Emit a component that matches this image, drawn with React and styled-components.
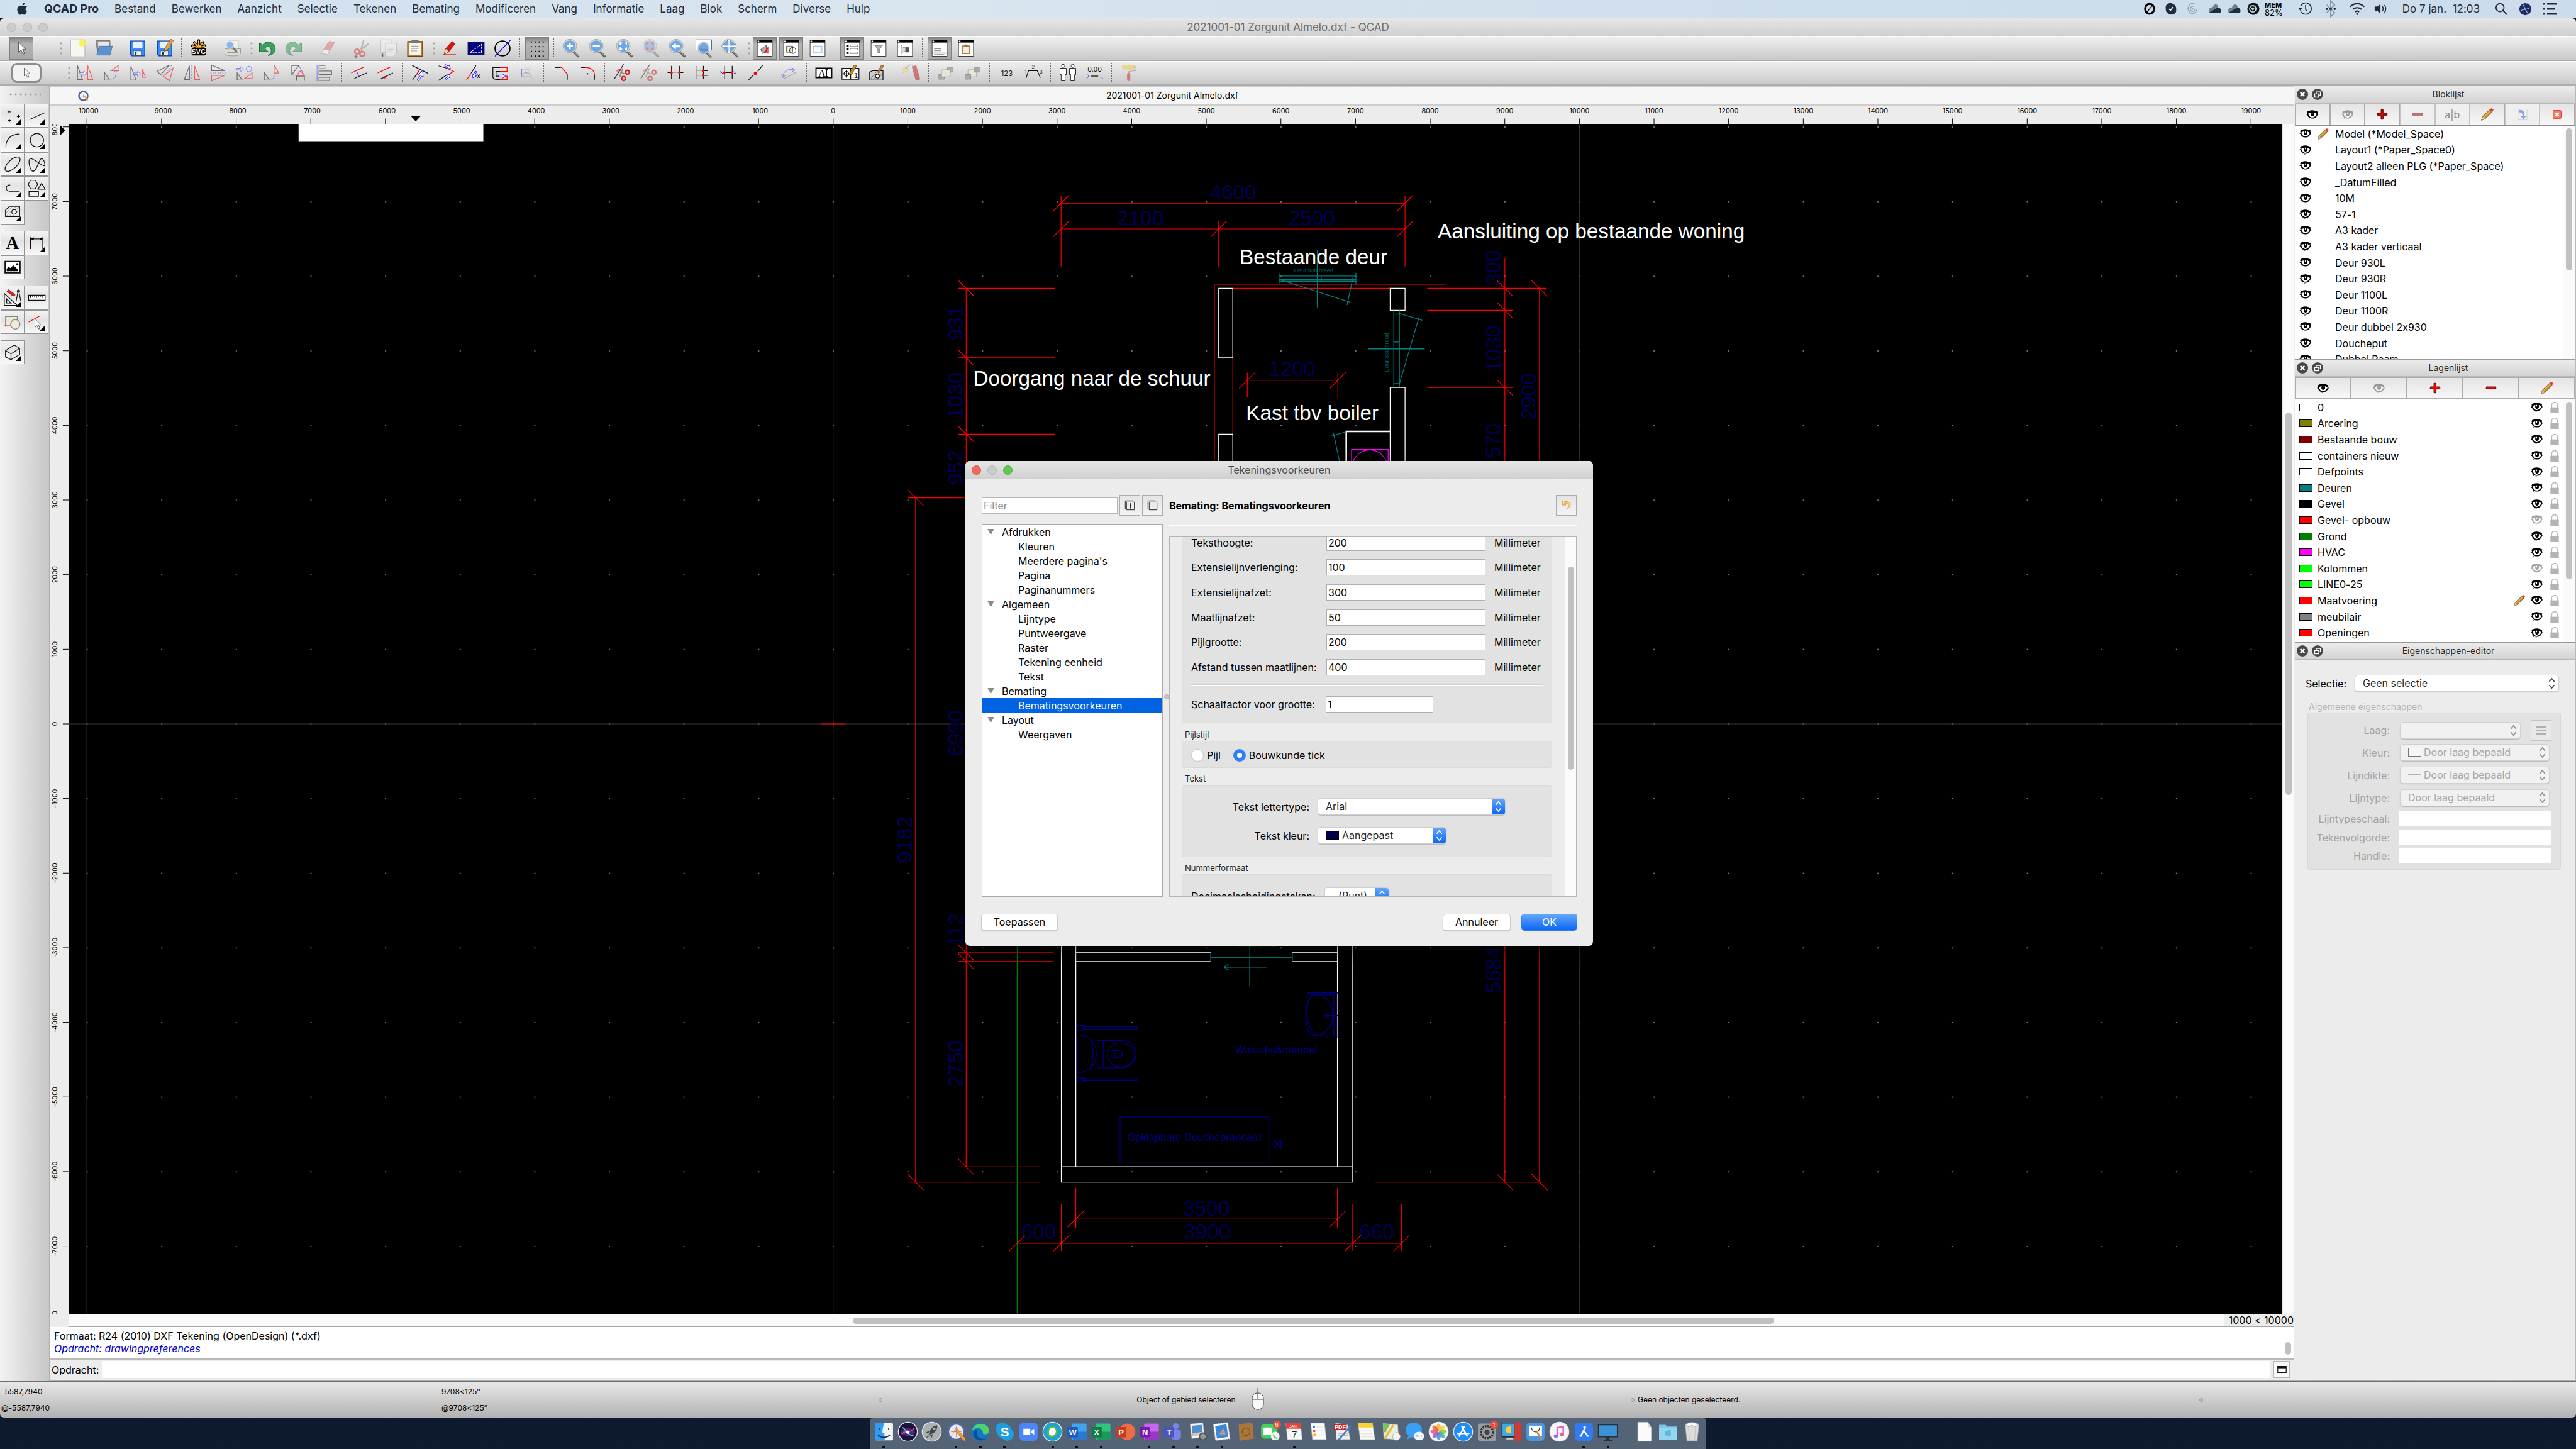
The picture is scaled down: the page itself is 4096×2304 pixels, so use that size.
import React from "react";
import styled, { createGlobalStyle, css } from "styled-components";

const UI = `Inter, "Liberation Sans", sans-serif`;
const CAD = `"Liberation Sans", Arial, sans-serif`;

const Global = createGlobalStyle`
  *, *::before, *::after { box-sizing: border-box; }
  html, body { margin: 0; height: 100%; background: #0a1322; }
  body { font-family: ${UI}; font-size: 16px; line-height: 20px; color: #000; overflow: hidden; font-feature-settings: "calt" 0; }
  button, input, select { font: inherit; font-feature-settings: inherit; color: inherit; margin: 0; padding: 0; border: 0; border-radius: 0; background: none; outline: none; }
  ul { list-style: none; margin: 0; padding: 0; }
  h1, h2, h3, p { margin: 0; font-weight: 400; font-size: inherit; }
  svg { display: block; }
`;

/* ------------------------------------------------------------------ shell */

const Desktop = styled.div`
  height: 100vh;
  display: grid;
  grid-template-rows: 29px 29px 39px 39px minmax(0, 1fr) 58px 50px;
  background: linear-gradient(180deg, #060b16 0%, #0d1a30 100%);
  position: relative;
`;

const MenuBar = styled.header`
  display: flex;
  justify-content: space-between;
  align-items: center;
  padding: 0 29px 0 27px;
  background: linear-gradient(90deg, #cfe0ee, #d9e5ef 35%, #cfdeec 70%, #ccdcec);
  border-bottom: 1px solid #1b2438;
  color: #1f2c3a;
  font-size: 17px;
`;
const MenuList = styled.nav`
  display: flex;
  align-items: center;
  gap: 25px;
`;
const MenuButton = styled.button`
  white-space: nowrap;
  ${(p) => p.$strong && css`font-weight: 700; font-size: 18px;`}
`;
const Tray = styled.div`
  display: flex;
  align-items: center;
  gap: 23px;
  white-space: nowrap;
`;
const TrayGroup = styled.div`
  display: flex;
  align-items: center;
  gap: ${(p) => p.$gap}px;
`;
const Mem = styled.div`
  font-size: 13px;
  line-height: 13px;
  color: #000;
  b { display: block; font-size: 11px; line-height: 12px; }
`;

const TitleBar = styled.div`
  display: flex;
  align-items: center;
  justify-content: center;
  position: relative;
  font-size: 17px;
  color: #6b6b6b;
  background: linear-gradient(180deg, #e6e6e6, #cfcfcf);
  border-bottom: 1px solid #a5a5a5;
  border-radius: 6px 6px 0 0;
`;
const Lights = styled.div`
  position: absolute;
  left: ${(p) => p.$left}px;
  display: flex;
  gap: ${(p) => p.$gap}px;
`;
const Light = styled.button`
  width: 15px;
  height: 15px;
  border-radius: 50%;
  background: ${(p) => p.$c || "#cbcbcb"};
  border: 1px solid ${(p) => p.$b || "#b2b2b2"};
`;

const ToolBar = styled.div`
  background: linear-gradient(180deg, #efefef, #c9c9c9);
  border-top: 1px solid #fafafa;
  border-bottom: 2px solid #adadad;
  overflow: hidden;
`;
const ToolStrip = styled.div`
  display: flex;
  align-items: center;
  justify-content: space-between;
  height: 36px;
  margin-left: 15px;
  width: ${(p) => p.$w}px;
`;
const ToolButton = styled.button`
  flex: none;
  width: 38px;
  height: 36px;
  display: grid;
  place-items: center;
  ${(p) => p.$on && css`background: linear-gradient(180deg, #868686, #b4b4b4 30%, #a8a8a8); border: 1px solid #808080;`}
  ${(p) => p.$off && css`opacity: 0.55;`}
`;
const PointerButton = styled.button`
  flex: none;
  width: 48px;
  height: 32px;
  margin-left: 3px;
  display: grid;
  place-items: center;
  border: 3px solid #8c8c8c;
  border-radius: 9px;
  background: #f2f2f2;
`;
const Sep = styled.span`
  flex: none;
  width: 8px;
  height: 32px;
  background: repeating-linear-gradient(180deg, #6f6f6f 0 2px, transparent 2px 4px) center / 1px 100% no-repeat;
`;
const Grip = styled.span`
  flex: none;
  width: 8px;
  height: 20px;
  background: radial-gradient(circle, #a2a2a2 1px, transparent 2px) right center / 4px 8px repeat-y;
`;
const Blank = styled.span`
  flex: none;
  width: ${(p) => p.$w}px;
`;

const Main = styled.main`
  display: grid;
  grid-template-columns: 80px minmax(0, 1fr) 449px;
  min-height: 0;
  background: #ececec;
`;

const Palette = styled.aside`
  background: linear-gradient(90deg, #f3f3f3, #c6c6c6);
  border-right: 2px solid #b0b0b0;
  padding: 9px 1px 0;
  display: flex;
  flex-direction: column;
  gap: 10px;
`;
const PaletteDots = styled.div`
  height: 10px;
  margin: 0 12px;
  background: radial-gradient(circle, #a2a2a2 1px, transparent 2px) left center / 8px 8px repeat-x;
`;
const PaletteGroup = styled.div`
  display: grid;
  grid-template-columns: 1fr 1fr;
  grid-auto-rows: 1fr;
  height: ${(p) => p.$h}px;
`;
const PaletteButton = styled.button`
  position: relative;
  border: 1px solid #949494;
  background: linear-gradient(180deg, #f3f3f3, #e3e3e3 40%, #f8f8f8);
  display: grid;
  place-items: center;
  ${(p) => p.$menu && css`
    &::after {
      content: "";
      position: absolute;
      right: 5px;
      bottom: 4px;
      border: 4px solid transparent;
      border-right-color: #000;
      border-bottom-color: #000;
    }
  `}
`;

/* ----------------------------------------------------------------- center */

const Center = styled.section`
  display: grid;
  grid-template-rows: 32px 29px minmax(0, 1fr) 21px 52px 34px;
  min-width: 0;
  min-height: 0;
`;
const Tab = styled.div`
  display: flex;
  align-items: center;
  background: #f6f6f6;
  border-top: 2px solid #cdcdcd;
  border-bottom: 2px solid #cdcdcd;
  font-size: 14px;
  padding-left: 44px;
`;
const TabTitle = styled.h2`
  flex: 1;
  text-align: center;
  margin-right: 60px;
`;
const RulerTop = styled.div`
  background: #ececec;
  overflow: hidden;
  svg { width: 100%; height: 100%; }
`;
const CanvasRow = styled.div`
  display: grid;
  grid-template-columns: 29px minmax(0, 1fr) 18px;
  min-height: 0;
`;
const RulerSide = styled(RulerTop)``;
const Canvas = styled.div`
  background: #000;
  min-height: 0;
  svg { width: 100%; height: 100%; }
`;
const VTrack = styled.div`
  background: ${(p) => p.$bg || "#fafafa"};
  border-left: 1px solid #e3e3e3;
  display: grid;
  justify-content: center;
  align-content: start;
  padding-top: ${(p) => p.$top}px;
`;
const VThumb = styled.div`
  width: 10px;
  height: ${(p) => p.$h}px;
  border-radius: 5px;
  background: #c1c1c1;
`;
const HScroll = styled.div`
  margin-left: 29px;
  display: flex;
  align-items: center;
  justify-content: space-between;
  border-bottom: 1px solid #a8a8a8;
`;
const HTrack = styled.div`
  flex: 1;
  height: 18px;
  background: #fafafa;
  padding: 5px 0 0 1247px;
`;
const HThumb = styled.div`
  width: 1465px;
  height: 10px;
  border-radius: 5px;
  background: #c1c1c1;
`;
const ScaleNote = styled.span`
  white-space: nowrap;
  padding-left: 8px;
`;
const Log = styled.div`
  display: grid;
  grid-template-columns: minmax(0, 1fr) 19px;
  background: #fff;
  border-bottom: 2px solid #b9b9b9;
`;
const LogLines = styled.div`
  height: 50px;
  overflow: hidden;
  display: flex;
  flex-direction: column;
  justify-content: flex-end;
  padding: 0 0 6px 6px;
  em { color: #0000c8; }
`;
const Command = styled.label`
  display: flex;
  align-items: center;
  gap: 5px;
  padding: 0 6px 1px 2px;
  border-bottom: 2px solid #aeaeae;
`;
const CommandInput = styled.input`
  flex: 1;
  height: 27px;
  background: #fff;
`;
const CommandButton = styled.button`
  width: 26px;
  height: 27px;
  background: #fafafa;
  border: 1px solid #b5b5b5;
  display: grid;
  place-items: center;
`;

/* ------------------------------------------------------------------ docks */

const Docks = styled.aside`
  display: flex;
  flex-direction: column;
  border-left: 1px solid #8f8f8f;
  border-right: 2px solid #b8b8b8;
  border-bottom: 2px solid #aeaeae;
  padding-left: 1px;
  min-height: 0;
`;
const DockHeader = styled.div`
  flex: none;
  height: 29px;
  display: flex;
  align-items: center;
  gap: 6px;
  padding-left: 3px;
  font-size: 14px;
  background: linear-gradient(180deg, #ececec, #d3d3d3);
  border-top: 1px solid #989898;
  border-bottom: 2px solid #b8b8b8;
  h2 { flex: 1; text-align: center; margin-right: 8px; color: #2a2a2a; }
`;
const RoundButton = styled.button`
  width: 18px;
  height: 26px;
  display: grid;
  place-items: center;
`;
const DockTools = styled.div`
  flex: none;
  height: 34px;
  display: grid;
  grid-auto-flow: column;
  grid-auto-columns: 1fr;
`;
const DockTool = styled.button`
  border: 1px solid #adadad;
  background: linear-gradient(180deg, #e4e4e4, #f7f7f7);
  display: grid;
  place-items: center;
  color: #8a8a8a;
  ${(p) => p.$off && css`border-color: #c4c4c4; background: #efefef; svg { opacity: 0.55; }`}
`;
const ListFrame = styled.div`
  flex: none;
  height: ${(p) => p.$h}px;
  display: grid;
  grid-template-columns: minmax(0, 1fr) 19px;
  grid-template-rows: 100%;
  overflow: hidden;
  background: #fff;
  border-top: 1px solid #8e8e8e;
`;
const List = styled.ul`
  display: grid;
  grid-auto-rows: 1fr;
  height: 384px;
  padding-left: 7px;
`;
const Row = styled.li`
  display: grid;
  grid-template-columns: ${(p) => p.$cols};
  align-items: center;
  white-space: nowrap;
`;
const Swatch = styled.span`
  display: block;
  width: 21px;
  height: ${(p) => p.$h || 12}px;
  background: ${(p) => p.$c};
  border: 1px solid ${(p) => p.$b || "#000"};
`;

const Props = styled.form`
  padding: 24px 22px 0 17px;
`;
const SelectionRow = styled.label`
  display: grid;
  grid-template-columns: 79px minmax(0, 1fr);
  align-items: center;
  margin: 0 4px 16px 0;
`;
const GroupTitle = styled.h3`
  font-size: ${(p) => p.$size || 14}px;
  line-height: 18px;
  padding-left: 5px;
  color: ${(p) => p.$c || "#1c1c1c"};
`;
const PropGroup = styled.div`
  margin-left: 3px;
  background: #e2e2e2;
  border: 1px solid #d8d8d8;
  border-radius: 4px;
  padding: 10px 14px 9px 12px;
  color: #a3a3a3;
`;
const PropLine = styled.label`
  display: grid;
  grid-template-columns: 118px minmax(0, 1fr);
  column-gap: ${(p) => p.$gap}px;
  align-items: center;
  height: 25px;
  margin-top: ${(p) => p.$mt || 0}px;
  padding-right: ${(p) => p.$end || 0}px;
  span:first-child { text-align: right; }
`;
const PropTop = styled.div`
  display: flex;
  align-items: center;
  gap: 17px;
  height: 34px;
  label { flex: 1; }
`;
const PropText = styled.input`
  height: 25px;
  width: 100%;
  background: #fff;
  border: 1px solid #c4c4c4;
`;
const MiniButton = styled.button`
  width: 33px;
  height: 33px;
  border: 1px solid #c4c4c4;
  background: #e8e8e8;
  display: grid;
  place-items: center;
`;

/* --------------------------------------------------------------- controls */

const SelectBox = styled.span`
  position: relative;
  display: block;
  width: ${(p) => (p.$w ? p.$w + "px" : "100%")};
  height: 25px;
  border-radius: 4px;
  background: ${(p) => (p.$off ? "#f1f1f1" : "#fff")};
  box-shadow: 0 0 0 1px ${(p) => (p.$off ? "#d2d2d2" : "#cfcfcf")}, 0 1px 1px 1px #b9b9b9;
  overflow: ${(p) => (p.$blue ? "hidden" : "visible")};
  select {
    appearance: none;
    width: 100%;
    height: 25px;
    line-height: 25px;
    padding-left: ${(p) => p.$pad || 12}px;
    color: ${(p) => (p.$off ? "#a6a6a6" : "#1f1f1f")};
    opacity: 1;
  }
`;
const Arrows = styled.span`
  position: absolute;
  right: 0;
  top: 0;
  width: 21px;
  height: 25px;
  display: grid;
  place-items: center;
  pointer-events: none;
  color: ${(p) => (p.$blue ? "#fff" : p.$off ? "#8a8a8a" : "#3a3a3a")};
  ${(p) => p.$blue && css`background: linear-gradient(180deg, #63a6fb, #0a66f5);`}
`;
const InSelect = styled.span`
  position: absolute;
  left: 12px;
  top: 5px;
  display: block;
  pointer-events: none;
`;

/* ----------------------------------------------------------------- dialog */

const Dialog = styled.div`
  position: absolute;
  left: 1535px;
  top: 733px;
  width: 998px;
  height: 771px;
  border-radius: 7px;
  overflow: hidden;
  background: #ececec;
  display: grid;
  grid-template-rows: 29px minmax(0, 1fr);
  box-shadow: 0 10px 30px rgba(0, 0, 0, 0.5);
`;
const DialogTitle = styled.div`
  position: relative;
  display: flex;
  align-items: center;
  justify-content: center;
  color: #4a4a4a;
  background: linear-gradient(180deg, #e6e6e6, #d0d0d0);
  border-bottom: 1px solid #b4b4b4;
`;
const DialogBody = styled.div`
  padding: 25px 26px;
  display: grid;
  grid-template-columns: 288px minmax(0, 1fr);
  column-gap: 10px;
  grid-template-rows: 33px minmax(0, 1fr) 26px;
`;
const FilterRow = styled.div`
  display: flex;
  align-items: center;
  gap: 3px;
`;
const FilterInput = styled.input`
  flex: 1;
  min-width: 0;
  height: 26px;
  background: #fff;
  border: 1px solid #b6b6b6;
  padding-left: 2px;
  &::placeholder { color: #8a8a8a; opacity: 1; }
`;
const SquareButton = styled.button`
  width: 33px;
  height: 33px;
  border: 1px solid #adadad;
  background: linear-gradient(180deg, #e4e4e4, #f4f4f4);
  display: grid;
  place-items: center;
`;
const HeadRow = styled.div`
  display: flex;
  align-items: center;
  justify-content: space-between;
  font-weight: 700;
`;
const Tree = styled.ul`
  margin: 13px 0 27px;
  background: #fff;
  border: 1px solid #a9a9a9;
`;
const TreeRow = styled.li`
  height: 23px;
  display: flex;
  align-items: center;
  padding-left: ${(p) => (p.$child ? 57 : 8)}px;
  gap: 12px;
  ${(p) => p.$sel && css`background: #0063e1; color: #fff;`}
`;
const Disclosure = styled.span`
  width: 11px;
  height: 10px;
  background: #8a8a8a;
  clip-path: polygon(0 0, 100% 0, 50% 100%);
`;
const PanelSide = styled.div`
  position: relative;
  margin: 15px 0 27px;
  border-top: 1px solid #fff;
  padding-top: 17px;
  min-height: 0;
  display: grid;
`;
const SplitDot = styled.span`
  position: absolute;
  left: -8px;
  top: 268px;
  width: 8px;
  height: 8px;
  border-radius: 50%;
  background: #c6c6c6;
  border: 1px solid #adadad;
`;
const Viewport = styled.div`
  min-height: 0;
  border: 1px solid #b5b5b5;
  display: grid;
  grid-template-columns: minmax(0, 1fr) 18px;
  grid-template-rows: minmax(0, 1fr);
`;
const Scroller = styled.div`
  overflow: hidden;
  display: flex;
  flex-direction: column;
  padding: 0 20px 0 19px;
`;
const Box = styled.div`
  flex: none;
  height: ${(p) => p.$h}px;
  background: #e2e2e2;
  border: 1px solid #d9d9d9;
  border-radius: 4px;
  padding: 0 14px;
  ${(p) => p.$cut && css`border-top: 0; border-radius: 0 0 4px 4px;`}
`;
const Fields = styled.div`
  display: grid;
  grid-auto-rows: 1fr;
  height: 238px;
  margin-top: -11px;
`;
const Field = styled.label`
  display: grid;
  grid-template-columns: ${(p) => p.$cols};
  align-items: center;
`;
const Unit = styled.span`
  padding-left: 14px;
`;
const NumberInput = styled.input`
  height: 26px;
  min-width: 0;
  background: #fff;
  border: 1px solid #b0b0b0;
  padding-left: 2px;
`;
const Rule = styled.hr`
  height: 2px;
  border: 0;
  margin: 7px 0 17px;
  background: linear-gradient(180deg, #cdcdcd 50%, #fff 50%);
`;
const SubTitle = styled(GroupTitle)`
  flex: none;
  height: ${(p) => p.$h}px;
  padding-top: ${(p) => p.$h - 19}px;
`;
const Radios = styled.div`
  display: flex;
  align-items: center;
  gap: 20px;
  height: 43px;
  label { display: flex; align-items: center; gap: 5px; }
`;
const Radio = styled.input`
  appearance: none;
  width: 20px;
  height: 20px;
  border-radius: 50%;
  background: #fff;
  border: 1px solid #c6c6c6;
  &:checked { border: 6px solid #2f80f8; }
`;
const Combos = styled.div`
  display: flex;
  flex-direction: column;
  gap: 21px;
  padding-top: 21px;
`;
const Combo = styled.label`
  display: grid;
  grid-template-columns: ${(p) => p.$cols || "188px auto"};
  column-gap: 14px;
  justify-content: start;
  align-items: center;
  span:first-child { text-align: ${(p) => (p.$left ? "left" : "right")}; white-space: nowrap; }
`;
const Actions = styled.div`
  grid-column: 1 / -1;
  display: flex;
  align-items: center;
  gap: 19px;
`;
const PushButton = styled.button`
  width: ${(p) => p.$w}px;
  height: 25px;
  border-radius: 4px;
  background: #fff;
  box-shadow: 0 0 0 1px #cdcdcd, 0 1px 1px 1px #b5b5b5;
  ${(p) => p.$push && css`margin-left: auto;`}
  ${(p) => p.$primary && css`background: linear-gradient(180deg, #63a6fb, #0a66f5); color: #fff; box-shadow: 0 0 0 1px #2f7ef0;`}
`;

/* -------------------------------------------------------- status and dock */

const StatusBar = styled.footer`
  display: grid;
  grid-template-columns: 699px 698px 1196px 904px minmax(0, 1fr);
  align-items: center;
  background: linear-gradient(180deg, #e8e8e8, #b2b2b2);
  border-top: 1px solid #6e6e6e;
  font-size: 12px;
  border-radius: 0 0 6px 6px;
`;
const Coords = styled.div`
  height: 52px;
  padding-left: 2px;
  display: flex;
  flex-direction: column;
  justify-content: space-around;
  line-height: 16px;
  border-left: ${(p) => (p.$line ? "1px solid #f5f5f5" : "0")};
`;
const StatusHint = styled.div`
  display: grid;
  grid-template-columns: 9px minmax(0, 1fr) 70px minmax(0, 1fr);
  align-items: center;
  span:nth-child(2) { text-align: right; }
  svg { justify-self: center; }
`;
const StatusCell = styled.div`
  display: flex;
  align-items: center;
  gap: 5px;
`;
const Dot = styled.i`
  width: 6px;
  height: 6px;
  border-radius: 50%;
  background: #c3c3c3;
  border: 1px solid #969696;
`;
const DockBar = styled.nav`
  justify-self: center;
  width: 1330px;
  background: #556377;
  border-radius: 6px 6px 0 0;
  padding: 0 3px;
  display: grid;
  grid-template-columns: repeat(31, 1fr) 19px repeat(3, 1fr);
`;
const DockApp = styled.button`
  position: relative;
  display: grid;
  grid-template-rows: 44px 6px;
  place-items: center;
  overflow: visible;
`;
const Running = styled.i`
  width: 4px;
  height: 4px;
  border-radius: 50%;
  background: #000;
`;
const Badge = styled.span`
  position: absolute;
  right: 2px;
  top: 5px;
  width: 13px;
  height: 13px;
  border-radius: 50%;
  background: #ea4b3d;
  color: #fff;
  font-size: 9px;
  line-height: 13px;
`;
const DockLine = styled.i`
  width: 1px;
  height: 36px;
  margin: 7px auto;
  background: #2d3746;
`;

/* ------------------------------------------------------------------ icons */

const Svg = ({ s = 30, h, vb = "0 0 48 48", children }) => (
  <svg width={s} height={h || s} viewBox={vb} fill="none" aria-hidden="true">{children}</svg>
);

const Eye = ({ off }) => (
  <svg width="19" height="15" viewBox="0 0 30 24" aria-hidden="true" opacity={off ? 0.35 : 1}>
    <path d="M0 11 3 9C1 5 3 2 8 1.500 13 0 18 0 23 2L29 4 28 7 30 11C27 14 26 19 20 21 12 23 5 20 3 13Z" fill="#000" />
    <path d="M5 9C8 7 9 7 12 6 10 12 12 16 16 16 20 16 22 11 20 6L27 10C24 16 20 19 15 19 10 19 6 14 5 9Z" fill="#fff" />
    <path d="M15 6V10" stroke="#fff" strokeWidth="2" />
    <path d="M6 21 8 22M12 23 15 23" stroke="#000" />
  </svg>
);
const Lock = () => (
  <svg width="14" height="18" viewBox="0 0 20 27" aria-hidden="true">
    <path d="M3 14V8a7 7 0 0 1 14 0V14" fill="none" stroke="#bababa" strokeWidth="2.500" />
    <rect x="0" y="13" width="20" height="14" fill="#b3b3b3" />
  </svg>
);
const Pencil = ({ s = 18 }) => (
  <svg width={s} height={s} viewBox="0 0 28 28" aria-hidden="true">
    <path d="M1 27 4 18 20 3 25 8 9 24Z" fill="#c8882c" stroke="#5b3a10" strokeWidth="1" />
    <path d="M6 20 21 6" stroke="#edc070" strokeWidth="2" />
    <path d="M1 27 4 18 9 24Z" fill="#f0d8a8" stroke="#5b3a10" strokeWidth=".6" />
    <path d="M20 3 23 0 28 3 25 8Z" fill="#e33" />
  </svg>
);
const Plus = () => <Svg s={18} vb="0 0 28 28"><path d="M11 2h5v9h10v5H16v10h-5V16H2v-5h9Z" fill="#f00" stroke="#300" strokeWidth="1.500" /></Svg>;
const Minus = () => <Svg s={18} vb="0 0 28 28"><path d="M2 11h24v5H2Z" fill="#f00" stroke="#300" strokeWidth="1.500" /></Svg>;
const Chevrons = () => <Svg s={11} h={19} vb="0 0 16 28"><path d="M2 10 8 3 14 10M2 18 8 25 14 18" stroke="currentColor" strokeWidth="2.600" /></Svg>;

const glass = (inner, o = 1) => (
  <g opacity={o}>
    <path d="M30 32 42 44" stroke="#5c5c58" strokeWidth="6" strokeLinecap="round" />
    <path d="M31 32 42 43" stroke="#a9a99f" strokeWidth="2" strokeLinecap="round" />
    <circle cx="21" cy="18" r="16" fill="#6fa6e4" stroke="#d5d5cc" strokeWidth="3" />
    <circle cx="21" cy="18" r="17.500" stroke="#8b8b82" strokeWidth="1" />
    {inner}
  </g>
);
const panel = (inner) => (
  <g>
    <path d="M5 3h38v41H5Z" fill="#fff" stroke="#333" strokeWidth="1.500" />
    <path d="M5 3h38v6H5Z" fill="#000" />
    <path d="M6 4h4v4H6Z" fill="#fff" />
    {inner}
  </g>
);
const cursor = <path d="M17 8 17 34 23 28 28 39 32 37 27 26 35 26Z" fill="#fff" stroke="#444" strokeWidth="1.500" />;
const K = { stroke: "#111", strokeWidth: 2 };
const R = { stroke: "#f00", strokeWidth: 2 };
const B = { stroke: "#22f", strokeWidth: 1.5 };
const RF = { fill: "#f00" };
const bArrow = (t) => <path transform={t} d="M0-2H10V-6L18 0 10 6V2H0Z" fill="#fff" {...B} />;

const I = {
  cursor,
  file: <g><path d="M7 2h36v43H7Z" fill="#f7f7f2" stroke="#999" /><circle cx="37" cy="10" r="9" fill="#f7f13a" opacity=".8" /></g>,
  open: <g><path d="M4 4h36v14H10L8 36Z" fill="#9b9b9b" stroke="#555" /><path d="M10 8h28v14H10Z" fill="#e8e8e8" /><path d="M12 18h34l-6 23H6Z" fill="#5a93cf" stroke="#2c5f9a" /></g>,
  save: <g><path d="M6 5h36v38H9L6 40Z" fill="#3a8bff" stroke="#003a9c" strokeWidth="2" /><path d="M12 6h24v18H12Z" fill="#e6f2ff" /><path d="M13 30h20v12H13Z" fill="#eee" stroke="#234" /><path d="M17 33h4v8h-4Z" fill="#234" /></g>,
  svg: <g><path d="M24 22V4M24 22 13 9M24 22 35 9M24 22 8 17M24 22 40 17" stroke="#000" strokeWidth="7" strokeLinecap="round" /><path d="M24 22V5M24 22 14 10M24 22 34 10M24 22 9 18M24 22 39 18" stroke="#ffb13b" strokeWidth="3.500" strokeLinecap="round" /><rect x="6" y="22" width="36" height="20" rx="4" fill="#000" /><text x="24" y="39" textAnchor="middle" fontFamily={CAD} fontWeight="700" fontSize="17" fill="#fff">SVG</text></g>,
  print: <g><path d="M12 3h26v24H12Z" fill="#eee" stroke="#888" /><path d="M4 25h40v12c0 3-6 6-20 6S4 40 4 37Z" fill="#dcdcd4" stroke="#777" /><path d="M10 34h28" stroke="#999" strokeWidth="3" /><path d="M24 22 33 31" stroke="#777" strokeWidth="5" strokeLinecap="round" /><circle cx="17" cy="15" r="9" fill="#86b6ea" stroke="#ddd" strokeWidth="2" /></g>,
  undo: <path d="M4 10 4 32 26 32 18 24C24 14 34 20 34 30 34 36 30 40 26 42 40 40 46 32 44 22 42 8 22 2 12 15Z" fill="#3aa05a" stroke="#12683a" strokeWidth="1.500" />,
  redo: <path transform="translate(48 0) scale(-1 1)" d="M4 10 4 32 26 32 18 24C24 14 34 20 34 30 34 36 30 40 26 42 40 40 46 32 44 22 42 8 22 2 12 15Z" fill="#3aa05a" stroke="#12683a" strokeWidth="1.500" />,
  eraser: <g><path d="M26 6 40 8 22 40 6 36Z" fill="#e57a7a" stroke="#a33" /><path d="M6 36 12 26 27 29 22 40Z" fill="#fff" stroke="#999" /></g>,
  cut: <g><path d="M28 2 20 30M40 12 16 30" stroke="#999" strokeWidth="4" /><circle cx="11" cy="32" r="6" stroke="#d33" strokeWidth="4" /><circle cx="24" cy="38" r="6" stroke="#d33" strokeWidth="4" /><path d="M8 41v8M4 45h8" {...K} /></g>,
  copy: <g><path d="M4 2h28v32H4Z" fill="#eee" stroke="#999" /><path d="M16 11h28v26l-8 8H16Z" fill="#f4f4f4" stroke="#888" /><path d="M20 20h18M20 26h18M20 32h12" stroke="#bbb" strokeWidth="2" /><path d="M9 37v8M5 41h8" {...K} /></g>,
  paste: <g><path d="M5 6h38v38H5Z" fill="#c07a1e" stroke="#6b430c" strokeWidth="2" /><path d="M9 10h30v30H9Z" fill="#f5f5f0" /><path d="M15 2h18v8H15Z" fill="#777" /><path d="M13 18h20M13 24h20M13 30h16" stroke="#aaa" strokeWidth="2" /></g>,
  pen: <g><path d="M10 39 14 24 30 6 38 12 22 32Z" fill="#d8180f" stroke="#600" /><path d="M10 39 14 24 22 32Z" fill="#f3d9a8" stroke="#543" /><path d="M8 40H40" {...R} /></g>,
  draft: <g><path d="M3 8h42v32H3Z" fill="#000080" stroke="#333" /><path d="M9 34 38 13M38 13V35M8 35H38" stroke="#fff" strokeWidth="2" strokeDasharray="5 2" /></g>,
  circ: <g><circle cx="24" cy="24" r="19" stroke="#000" strokeWidth="3" /><path d="M5 44 44 3" stroke="#00f" strokeWidth="2" /></g>,
  grid: <g fill="#000">{[6, 18, 30, 42].map((y) => [8, 18, 28, 38].map((x) => <rect key={x + "-" + y} x={x} y={y} width="3" height="3" />))}</g>,
  zin: glass(<path d="M19 10h4v6h6v4h-6v6h-4v-6h-6v-4h6Z" fill="#fff" />),
  zout: glass(<path d="M12 16h18v4H12Z" fill="#fff" />),
  zauto: glass(<path d="M13 15V10h5M24 10h5v5M29 21v5h-5M18 26h-5v-5" stroke="#fff" strokeWidth="3" />),
  zsel: glass(<path d="M13 15V10h5M24 10h5v5M29 21v5h-5M18 26h-5v-5" stroke="#e33" strokeWidth="4" />, 0.5),
  zprev: glass(<path d="M10 18 20 9V15H30V21H20V27Z" fill="#fff" />),
  zwin: <g><path d="M4 2h40v26H4Z" fill="#fff" stroke="#2b66b5" strokeWidth="1.500" /><g transform="translate(6 8) scale(.85)">{glass(<path d="M8 20h26v6H10Z" fill="#3f7fd0" opacity=".6" />)}</g></g>,
  zpan: glass(<path d="M21-1 26 5H23V16H34V13L40 18 34 23V20H23V31H26L21 37 16 31H19V20H8V23L2 18 8 13V16H19V5H16Z" fill="#fff" stroke="#2b66b5" strokeWidth="1" />),
  p1: panel(<g><path d="M14 26 28 16V32L18 37Z" fill="#aaa" stroke="#222" /><path d="M24 34 32 22V36Z" {...R} /></g>),
  p2: panel(<g><path d="M12 18h16v16H12Z" fill="#f6efcf" stroke="#222" /><circle cx="28" cy="29" r="8" stroke="#222" strokeWidth="1.500" /></g>),
  p3: panel(<path d="M13 18h22v17H13Z" fill="#f6faff" stroke="#a9c4e6" strokeWidth="2" />),
  p4: panel(<g>{[15, 24, 33].map((y) => <g key={y}><path d={`M9 ${y}h6v5h-6Z`} fill="#000" /><path d={`M19 ${y}h19v4h-19Z`} stroke="#222" /></g>)}</g>),
  p5: panel(<path d="M14 16H34L27 26V36L22 34V26Z" fill="#bbb" stroke="#444" />),
  p6: panel(<g><path d="M14 16 20 22H26V32H20L14 38Z" fill="#ddd" stroke="#555" /><path d="M25 21H34V34H25Z" fill="#555" /><path d="M8 28H40" stroke="#e55" strokeDasharray="3 2" /></g>),
  p7: panel(<g><path d="M10 15h14M10 20h16M10 25h18M10 30h17" stroke="#777" strokeWidth="1.500" /><path d="M5 36H43" stroke="#222" strokeWidth="2" /><path d="M10 40h26" stroke="#777" strokeWidth="2" /></g>),
  p8: panel(<g><path d="M16 18h16v19H16Z" fill="#eee" stroke="#b87a20" strokeWidth="3" /><path d="M20 14h8v5h-8Z" fill="#777" /></g>),

  t1: <g><path d="M5 5V41H18Z" {...K} /><path d="M31 5V41H44Z" {...R} />{bArrow("translate(11 25)")}</g>,
  t2: <g><path d="M5 23V42H18Z" {...K} /><path d="M42 4V18H22Z" {...R} /><path d="M22 40C34 38 36 28 34 18M30 22 34 16 38 22" {...B} /></g>,
  t3: <g><path d="M5 7V42H18Z" {...K} /><path d="M34 14V35H42Z" {...R} />{bArrow("translate(12 26)")}</g>,
  t4: <g><path d="M36 4 4 20 14 28Z" {...K} /><path d="M45 12 36 44 20 32Z" {...R} /><path d="M42 4 24 30" {...B} strokeDasharray="4 3" /></g>,
  t5: <g><path d="M18 6V41H5Z" {...K} /><path d="M31 6V41H44Z" {...R} /><path d="M24 3V44" {...B} strokeDasharray="5 3" /></g>,
  t6: <g><path d="M7 4V18H41Z" {...K} /><path d="M7 44V30H41Z" {...R} /><path d="M4 24H44" {...B} strokeDasharray="3 3" /></g>,
  t7: <g><path d="M5 24V42H18Z" {...K} /><path d="M43 24V38H24Z" {...R} />{bArrow("translate(4 14)")}<circle cx="35" cy="14" r="7" {...B} /></g>,
  t8: <g><path d="M5 23V42H18Z" {...K} /><path d="M30 4V24H42Z" {...R} /><path d="M22 40C32 38 34 30 33 22" {...B} /></g>,
  t9: <g><path d="M8 5H26L8 28ZM20 44V32H40V44" {...K} /><path d="M30 18 40 31H20Z" {...R} /><path d="M26 5 40 31M8 28 20 31" {...B} /></g>,
  t10: <g><path d="M10 5h15v8H10ZM10 19h32v9H10ZM10 35h27v8H10Z" {...K} /><path d="M5 3V45" {...B} /></g>,
  t11: <g><path d="M4 24 36 9" {...R} /><path d="M12 38 43 24" {...K} /><path d="M18 20 24 34" {...B} /></g>,
  t12: <g><path d="M4 24 36 9" {...R} /><path d="M12 39 43 24" {...K} /><circle cx="21" cy="35" r="3" {...RF} /></g>,
  t13: <g><path d="M4 5 44 25M4 43 22 18" {...K} /><path d="M22 16 14 30" {...R} /><path d="M16 42 25 30 20 28 30 18 32 34 28 32 20 44Z" fill="#fff" {...B} /></g>,
  t14: <g><path d="M4 6 24 12M4 43 26 28" {...K} /><path d="M22 11 42 20 26 30" {...R} />{bArrow("translate(20 4) rotate(30) scale(.9)")}{bArrow("translate(22 40) rotate(-50) scale(.9)")}</g>,
  t15: <g><path d="M30 5 18 24" {...K} /><path d="M18 24 6 42" {...R} />{bArrow("translate(30 20) rotate(115)")}<path d="M34 28 40 36M40 28 34 36" {...K} /></g>,
  t16: <g><path d="M24 10H6V34C6 40 12 41 24 41M24 20H14V32H24" {...K} /><path d="M24 10H42V20H24M24 32H42V41H24" {...R} />{bArrow("translate(20 32)")}</g>,
  t17: <g><path d="M12 14H36V34H12Z" {...B} /><path d="M12 34C12 20 34 20 36 34" stroke="#777" strokeWidth="2" /><path d="M20 2 44 46M36 4 12 30" stroke="#f99" /></g>,
  t18: <g><path d="M8 10H22M40 28V41" {...K} /><path d="M22 10H26L40 27V30" {...R} /></g>,
  t19: <g><path d="M8 10H18M42 30V41" {...K} /><path d="M18 10C34 10 42 16 42 30" {...R} /><circle cx="24" cy="26" r="2" fill="#00f" /></g>,
  t20: <g><path d="M28 2 4 40" {...K} /><path d="M10 18 30 26M26 12 18 34" stroke="#888" strokeWidth="3" /><circle cx="38" cy="22" r="5" stroke="#c22" strokeWidth="4" /><circle cx="28" cy="38" r="5" stroke="#c22" strokeWidth="4" /><circle cx="18" cy="16" r="3" {...RF} /></g>,
  t21: <g><path d="M14 6V40M34 6V40M4 23H14M34 23H44" {...K} /><path d="M14 23H34" stroke="#aaa" strokeWidth="2" /><circle cx="14" cy="23" r="3" {...RF} /><circle cx="34" cy="23" r="3" {...RF} /></g>,
  t22: <g><path d="M9 6V40M28 6V40M28 18H40M28 30H40" {...K} /><path d="M9 18H28M9 30H28" stroke="#aaa" strokeWidth="2" /><circle cx="28" cy="18" r="3" {...RF} /><circle cx="28" cy="30" r="3" {...RF} /></g>,
  t23: <g><path d="M14 6V40M34 6V40M14 23H34" {...K} /><circle cx="14" cy="23" r="3" {...RF} /><circle cx="34" cy="23" r="3" {...RF} /><path d="M4 20 10 26M10 20 4 26M38 20 44 26M44 20 38 26" {...B} /></g>,
  t24: <g><path d="M43 4 30 20M6 43 18 30" {...K} /><circle cx="24" cy="25" r="4" {...RF} /></g>,
  t25: <g><path d="M12 38 42 22" stroke="#777" strokeWidth="2" /><path d="M8 34C8 20 20 12 36 16M30 10 38 16 30 22M4 28 8 36 14 30" {...B} /></g>,
  t26: <g><path d="M4 12H44V36H4Z" fill="#fff" stroke="#000" strokeWidth="3" /><text x="19" y="33" textAnchor="middle" fontFamily='"Liberation Serif", serif' fontSize="26" fill="#000">A</text><path d="M31 15V33M28 15H34M28 33H34" {...K} /></g>,
  t27: <g><path d="M3 12H46V40H3ZM25 12V40" {...K} fill="#fff" /><circle cx="14" cy="26" r="6" {...K} /><path d="M14 16V36M4 26H24" {...K} /><text x="36" y="36" textAnchor="middle" fontFamily={CAD} fontSize="18" fill="#111">.1</text><path d="M20 28 34 4 40 6 28 28Z" fill="#c8882c" stroke="#5b3a10" /></g>,
  t28: <g><path d="M5 22 14 18H40V42H5Z" {...K} fill="#ccc" /><path d="M8 40 24 20M16 41 32 20M26 41 39 25" stroke="#444" /><circle cx="26" cy="32" r="5" {...K} fill="#fff" /><path d="M26 22 36 4 42 6 30 24Z" fill="#c8882c" stroke="#5b3a10" /></g>,
  t29: <g><path d="M26 8 36 5 46 40 36 43Z" fill="#c22" stroke="#611" /><path d="M28 6C22 0 14 6 10 14" stroke="#777" strokeWidth="2" /><path d="M9 6 11 13 18 12 13 17 16 24 10 20 3 24 6 17 1 12 8 13Z" fill="#fbe04a" stroke="#a80" strokeWidth=".6" /></g>,
  t30: <g><path d="M28 10h14v12H28ZM6 28h14v12H6Z" fill="#888" stroke="#333" /><path d="M13 16h22v18H13Z" fill="#f3ecd2" stroke="#333" /></g>,
  t31: <g><path d="M13 16h22v18H13Z" fill="#f3ecd2" stroke="#333" /><path d="M28 10h14v12H28Z" fill="#777" stroke="#333" /><path d="M6 28h14v12H6Z" fill="#888" stroke="#333" /></g>,
  t32: <text x="24" y="32" textAnchor="middle" fontFamily={UI} fontSize="18" fill="#111">123</text>,
  t33: <g><path d="M6 36 12 18H34L42 36" {...K} /><g fontFamily={UI} fontSize="12" fill="#111"><text x="20" y="12">2</text><text x="2" y="26">1</text><text x="40" y="26">3</text></g></g>,
  t34: <g fill="#fff" stroke="#222" strokeWidth="1.500">{[12, 36].map((x) => <g key={x}><circle cx={x} cy="6" r="4" /><path d={`M${x - 8} 12h16v16h-3v16h-10v-16h-3Z`} /></g>)}</g>,
  t35: <g><text x="25" y="20" textAnchor="middle" fontFamily={UI} fontSize="17" fill="#111">0.00</text><path d="M16 32H34" {...K} /><path d="M4 26 10 32 4 39M46 26 40 32 46 39" {...B} /></g>,
  t36: <g><rect x="8" y="4" width="30" height="10" rx="2" fill="#f1c832" stroke="#876" /><path d="M38 8H42V18L24 20V24" stroke="#888" strokeWidth="2" /><rect x="20" y="24" width="7" height="20" rx="3" fill="#e22" stroke="#844" /></g>,
};

/* --------------------------------------------------------------- toolbars */

const bar1 = [
  ["cursor", "Selecteren", { $on: true }], 30, "grip", ["file", "Nieuw"], ["open", "Openen"], "|", ["save", "Opslaan"], ["save", "Opslaan als", { pen: true }], "|",
  ["svg", "SVG export"], "|", ["print", "Afdrukvoorbeeld"], "grip", ["undo", "Ongedaan maken"], ["redo", "Opnieuw", { $off: true }], "|", ["eraser", "Wissen", { $off: true }], "|",
  ["cut", "Knippen", { $off: true }], ["copy", "Kopiëren", { $off: true }], ["paste", "Plakken"], "grip", ["pen", "Pen"], ["draft", "Conceptweergave"], ["circ", "Antialiasing"], "|",
  ["grid", "Raster", { $on: true }], "|", ["zin", "Inzoomen"], ["zout", "Uitzoomen"], ["zauto", "Auto zoom"], ["zsel", "Zoom selectie"], ["zprev", "Vorige weergave"], ["zwin", "Zoom venster"], ["zpan", "Pannen"], "grip",
  ["p1", "Bibliotheek", { $on: true }], ["p2", "Blokken", { $on: true }], ["p3", "Lagen"], "|", ["p4", "Eigenschappen", { $on: true }], ["p5", "Filter"], ["p6", "Weergave"], "|", ["p7", "Opdrachtregel", { $on: true }], ["p8", "Klembord"],
];
const t = (n, off) => ["t" + n, "Gereedschap " + n, off ? { $off: true } : {}];
const bar2 = [
  "pointer", "|", 17, "grip", ...[1, 2, 3, 4, 5, 6, 7, 8, 9, 10].map((n) => t(n, 1)), "|", t(11), t(12), "|", t(13), t(14), t(15), t(16), t(17, 1), "|", t(18), t(19), "|",
  t(20), t(20, 1), t(21), t(22), t(23), t(24), "|", t(25, 1), "|", t(26), t(27), t(28), "|", t(29, 1), "|", t(30, 1), t(31, 1), "|", t(32), t(33), "|", t(34), t(35), "|", t(36, 1),
];

const Strip = ({ items, w }) => (
  <ToolStrip $w={w}>
    {items.map((it, i) => {
      if (it === "|") return <Sep key={i} />;
      if (it === "grip") return <Grip key={i} />;
      if (it === "pointer") return <PointerButton key={i} aria-label="Selectie"><Svg s={24}>{cursor}</Svg></PointerButton>;
      if (typeof it === "number") return <Blank key={i} $w={it} />;
      const [id, label, o = {}] = it;
      return (
        <ToolButton key={i} aria-label={label} $on={o.$on} $off={o.$off}>
          <Svg>{I[id]}{o.pen && <g transform="translate(14 0)"><path d="M8 32 12 20 26 0 32 4 18 26Z" fill="#f0a030" stroke="#6b430c" /></g>}</Svg>
        </ToolButton>
      );
    })}
  </ToolStrip>
);

const paletteIcons = {
  points: <path d="M15 10v8M11 14h8M39 22v8M35 26h8M16 32v8M12 36h8" {...K} />,
  line: <path d="M6 34 46 16" {...K} />,
  arc: <path d="M7 40C7 20 22 8 42 8" {...K} />,
  circle: <circle cx="25" cy="24" r="17" {...K} />,
  ellipse: <ellipse cx="24" cy="24" rx="24" ry="11" transform="rotate(-43 24 24)" {...K} />,
  spline: <path d="M14 42C6 36 2 14 8 10 14 6 40 32 44 28 48 24 40 6 36 10 30 14 24 44 14 42Z" {...K} />,
  poly: <path d="M18 16C4 16 6 32 16 32H42" {...K} />,
  shapes: <path d="M9 4H21L27 14 21 26H9L3 14ZM37 12 46 27H28ZM5 33H29V45H5Z" {...K} />,
  hatch: <g><path d="M6 18 16 8H42V34H6Z" {...K} fill="#eee" /><path d="M8 33 32 9M16 33 40 10M24 33 42 17M8 24 22 9" stroke="#555" /><circle cx="28" cy="22" r="6" {...K} fill="#eee" /></g>,
  text: <text x="24" y="40" textAnchor="middle" fontFamily='"Liberation Serif", serif' fontWeight="700" fontSize="46" fill="#000">A</text>,
  dim: <g><path d="M9 10V40M40 10V40M10 14H39" {...K} /><path d="M9 14 17 10V18ZM40 14 32 10V18Z" fill="#000" /></g>,
  image: <g><path d="M5 9H43V38H5Z" {...K} strokeWidth="3" fill="#fff" /><path d="M9 34V28L14 22 18 26 26 19 38 30V34Z" fill="#000" /><circle cx="36" cy="16" r="3" fill="#000" /></g>,
  draw: <g><path d="M3 14V44H36ZM9 28V38H20Z" {...K} /><path d="M9 8 14 4 30 16 30 20 24 20Z" fill="#d22" stroke="#500" /><path d="M38 8 33 34M40 8 45 34" {...K} /><circle cx="39" cy="8" r="3" {...K} /></g>,
  ruler: <g><path d="M4 18H46V31H4Z" {...K} fill="#fff" /><path d="M9 18v7M14 18v4M19 18v4M24 18v7M29 18v4M34 18v4M40 18v7" {...K} /></g>,
  block: <g opacity=".6"><path d="M6 10H36V32H6Z" fill="#f2ebc8" stroke="#444" strokeWidth="2" /><circle cx="31" cy="30" r="12" fill="#f2ebc8" stroke="#444" strokeWidth="2" /><path d="M6 28v8M2 32h8" {...R} /></g>,
  pick: <g><path d="M4 24 34 8" {...R} /><path d="M20 16V38L25 33 30 42 33 40 29 31H35Z" fill="#fff" stroke="#444" strokeWidth="1.500" /></g>,
  box: <path d="M6 20 28 6 42 14V30L20 43 6 36ZM6 20 20 28 42 14M20 28V43" {...K} />,
};
const palette = [
  [192, ["points", "line", "arc", "circle", "ellipse", "spline", "poly", "shapes", "hatch"]],
  [77, ["text", "dim", "image"]],
  [77, ["draw", "ruler", "block", "pick"]],
  [38, ["box"]],
];
const noMenu = ["text", "image", "ruler", "block"];

/* ------------------------------------------------------------- CAD canvas */

const U = 185.4;
const OX = 2070;
const OY = 1798.6;

const tick = (x, y, v) => (v ? `M${x - 20} ${y - 20}L${x + 20} ${y + 20}` : `M${x - 20} ${y + 20}L${x + 20} ${y - 20}`);
const Turn = ({ x, y, children, ...r }) => <text transform={`translate(${x} ${y}) rotate(-90)`} textAnchor="middle" {...r}>{children}</text>;

const redPath = [
  "M2636.400 486V662M3491 486V662M2636.400 505H3491M2636.400 569H3491M3028 550V662",
  tick(2636.4, 505), tick(3491, 505), tick(2636.4, 569), tick(3028, 569), tick(3491, 569),
  "M3063 716.500H3454M3063 889V1079M3099 945H3324M3099 926V988M3324 926V990",
  tick(3099, 945), tick(3324, 945),
  "M3739 642V2937M3825 716.500V2937M3546 716.500H3843M3546 771H3758M3546 963H3758M3416 2937H3843",
  tick(3739, 716.5, 1), tick(3739, 771, 1), tick(3739, 963, 1), tick(3825, 716.5, 1), tick(3739, 2937, 1), tick(3825, 2937, 1),
  "M2400.600 716.500V2899M2381 716.500H2622M2381 889H2622M2381 1079H2622M2380 2367H2618M2380 2389H2618M2380 2899H2584",
  tick(2400.6, 716.5, 1), tick(2400.6, 889, 1), tick(2400.6, 1079, 1), tick(2400.6, 2367, 1), tick(2400.6, 2389, 1), tick(2400.6, 2899, 1),
  "M2275 1237V2937M2255 1237H2584M2255 2937H2584", tick(2275, 1237, 1), tick(2275, 2937, 1),
  "M2673 2952V3050M3323 2952V3050M2673 3029H3323", tick(2673, 3029), tick(3323, 3029),
  "M2637 2992V3108M3361 2992V3108M3482 2992V3108M2527 3089H3482", tick(2527, 3089), tick(2637, 3089), tick(3361, 3089), tick(3482, 3089),
  "M2040 1798.600H2100M2070 1788V1809",
].join("");

const Drawing = () => (
  <svg role="img" aria-label="Plattegrond">
    <defs>
      <pattern id="gridDots" x={OX - 1} y={OY - 1} width={U} height={U} patternUnits="userSpaceOnUse"><rect width="3" height="3" fill="#7b7b7b" /></pattern>
    </defs>
    <g transform="scale(0.64) translate(-170.500 -308)" fill="none" fontFamily={CAD}>
      <rect x="170" y="308" width="5500" height="2960" fill="url(#gridDots)" />
      <path d={`M${OX - 10 * U} 300V3300M${OX} 300V3300M${OX + 10 * U} 300V3300M170 ${OY}H5680`} stroke="#3a3a3a" strokeWidth="1.600" />
      <rect x="742" y="300" width="459" height="51" fill="#fff" />
      <path d="M2527.400 2300V3264" stroke="#008000" strokeWidth="2" />
      <path d="M3592 707H3018V1200" stroke="#800000" strokeWidth="2" />
      <path d={redPath} stroke="#f00" strokeWidth="1.800" />
      <g stroke="#fff" strokeWidth="2">
        <path d="M3028 716.500H3063V889H3028ZM3028 1200V1079H3063V1200M3454 716.500H3491V771H3454ZM3454 1200V963H3491V1200" />
        <path d="M3345 1200V1072H3454" strokeWidth="4" />
        <path d="M2637 2300V2937H3361V2300M2673 2300V2899M3323 2300V2899M2637 2899H3361M2673 2367H3008M2673 2389H3008M3211 2367H3323M3211 2389H3323" />
      </g>
      <g stroke="#008080" strokeWidth="2">
        <path d="M3178 686H3369M3178 695H3369M3178 699H3369M3178 678V707M3369 678V707M3273 622V764M3186 697 3355 751M3362 688 3347 758M3283 688V699" />
        <path d="M3463 771V963M3477 771V963M3463 781H3477M3474 778 3534 796M3527 784 3477 954M3400 867H3540M3463 850H3477V867M3463 953H3477" />
        <path d="M3344 1073 3307 1084M3313 1075 3328 1146" />
        <path d="M3008 2367V2389M3211 2367V2389M3008 2379H3211M3105 2340V2450M3042 2403H3148M3051 2396V2410L3042 2403Z" />
      </g>
      <path d="M3358 1200V1117H3449V1200M3358 1160C3368 1104 3438 1104 3449 1160" stroke="#f0f" strokeWidth="2" />
      <g stroke="#000080" strokeWidth="2">
        <path d="M3248 2467H3324V2579H3248ZM3262 2472H3314V2574H3262C3238 2556 3238 2490 3262 2472M3285 2473C3322 2500 3322 2550 3276 2574C3240 2560 3240 2490 3262 2470M3292 2523H3324M3300 2517 3291 2523 3300 2529Z" />
        <path d="M2677 2542V2564M2689 2550.600H2825V2557.400H2689ZM2677 2548H2695V2559H2677M2677 2672V2694M2689 2680H2825V2685H2689ZM2677 2678H2695V2688H2677" />
        <path d="M2677 2571C2700 2571 2724 2590 2724 2618 2724 2648 2700 2665 2677 2665ZM2711 2585C2718 2610 2718 2630 2708 2658M2726 2585H2790C2834 2590 2834 2648 2790 2653H2726ZM2741 2587V2651M2771 2611V2627M2762 2610H2778C2792 2612 2792 2626 2778 2628H2762" />
        <ellipse cx="2785" cy="2621" rx="34" ry="30" />
        <path d="M2783 2775H3153V2887H2783ZM3165 2832H3183V2853H3165ZM3165 2832 3183 2853M3183 2832 3165 2853" />
      </g>
      <g fill="#000052" fontSize="52" textAnchor="middle">
        <text x="3064" y="496">4600</text>
        <text x="2833" y="560">2100</text>
        <text x="3259" y="560">2500</text>
        <text x="3210" y="935">1200</text>
        <text x="2997" y="3020">3500</text>
        <text x="2999" y="3079">3900</text>
        <text x="2581" y="3079">600</text>
        <text x="3421" y="3079">660</text>
        <Turn x={3729} y={665}>300</Turn>
        <Turn x={3729} y={867}>1030</Turn>
        <Turn x={3816} y={985}>2900</Turn>
        <Turn x={3729} y={1095}>570</Turn>
        <Turn x={3729} y={2410}>5684</Turn>
        <Turn x={2392} y={803}>931</Turn>
        <Turn x={2392} y={983}>1030</Turn>
        <Turn x={2392} y={1162}>952</Turn>
        <Turn x={2392} y={1822}>6990</Turn>
        <Turn x={2392} y={2311}>112</Turn>
        <Turn x={2392} y={2643}>2750</Turn>
        <Turn x={2266} y={2086}>9182</Turn>
      </g>
      <g fill="#000080" fontSize="26" textAnchor="middle">
        <text x="3171" y="2618">Wastafel&amp;meubel</text>
        <text x="2968" y="2835">Opklapbare Douchebrancard</text>
      </g>
      <g fill="#006060" fontSize="14" textAnchor="middle">
        <text x="3264" y="676">Deur 930 breed</text>
        <Turn x={3450} y={876}>Deur 930 breed</Turn>
        <text x="3121" y="2354">Schuifdeur 1100</text>
      </g>
      <g fill="#fff" fontSize="52">
        <text x="3572" y="592">Aansluiting op bestaande woning</text>
        <text x="3080" y="656">Bestaande deur</text>
        <text x="2418" y="958">Doorgang naar de schuur</text>
        <text x="3096" y="1044">Kast tbv boiler</text>
      </g>
    </g>
  </svg>
);

const range = (a, b) => Array.from({ length: b - a + 1 }, (_, i) => a + i);
const HRuler = () => (
  <svg aria-hidden="true">
    <g transform="scale(0.64) translate(-125 -262)" fontFamily={UI} fontSize="17" textAnchor="middle" fill="#000">
      {range(-10, 19).map((n) => (
        <g key={n}>
          <text x={OX + n * U} y="280">{n * 1000}</text>
          <path d={`M${OX + n * U} 294V310`} stroke="#000" strokeWidth="1.600" />
        </g>
      ))}
      <path d="M1021 288H1045L1033 301Z" />
    </g>
  </svg>
);
const VRuler = () => (
  <svg aria-hidden="true">
    <g transform="scale(0.64) translate(-125 -308)" fontFamily={UI} fontSize="17" fill="#000">
      {range(-8, 8).map((n) => (
        <g key={n}>
          <Turn x={142} y={OY - n * U}>{n * 1000}</Turn>
          <path d={`M156 ${OY - n * U}H172`} stroke="#000" strokeWidth="1.600" />
        </g>
      ))}
      <path d="M150 312V336L162 324Z" />
    </g>
  </svg>
);

/* ------------------------------------------------------------------- data */

const menus = ["Bestand", "Bewerken", "Aanzicht", "Selectie", "Tekenen", "Bemating", "Modificeren", "Vang", "Informatie", "Laag", "Blok", "Scherm", "Diverse", "Hulp"];
const blocks = ["Model (*Model_Space)", "Layout1 (*Paper_Space0)", "Layout2 alleen PLG (*Paper_Space)", "_DatumFilled", "10M", "57-1", "A3 kader", "A3 kader verticaal", "Deur 930L", "Deur 930R", "Deur 1100L", "Deur 1100R", "Deur dubbel 2x930", "Doucheput", "Dubbel Raam"];
const layers = [
  ["0", "#fff"], ["Arcering", "#808000"], ["Bestaande bouw", "#800000"], ["containers nieuw", "#fff"], ["Defpoints", "#fff"], ["Deuren", "#008080"], ["Gevel", "#000"],
  ["Gevel- opbouw", "#f00", "off"], ["Grond", "#008000"], ["HVAC", "#f0f"], ["Kolommen", "#0f0", "off"], ["LINE0-25", "#0f0"], ["Maatvoering", "#f00", "edit"], ["meubilair", "#808080"], ["Openingen", "#f00"],
];
const tree = [
  ["Afdrukken"], ["Kleuren", 1], ["Meerdere pagina's", 1], ["Pagina", 1], ["Paginanummers", 1], ["Algemeen"], ["Lijntype", 1], ["Puntweergave", 1], ["Raster", 1],
  ["Tekening eenheid", 1], ["Tekst", 1], ["Bemating"], ["Bematingsvoorkeuren", 1], ["Layout"], ["Weergaven", 1],
];
const sizes = [["Teksthoogte:", "200"], ["Extensielijnverlenging:", "100"], ["Extensielijnafzet:", "300"], ["Maatlijnafzet:", "50"], ["Pijlgrootte:", "200"], ["Afstand tussen maatlijnen:", "400"]];

const letter = (c, l, c2) => (
  <g><rect x="12" y="5" width="34" height="38" rx="3" fill={c2} /><path d="M12 24H46V43H15Z" fill={c} opacity=".6" /><rect x="2" y="13" width="24" height="24" rx="2" fill={c} /><text x="14" y="32" textAnchor="middle" fontFamily={CAD} fontWeight="700" fontSize="19" fill="#fff">{l}</text></g>
);
const disc = (c, inner) => <g><circle cx="24" cy="24" r="22" fill={c} stroke="#e6e6e6" strokeWidth="2" />{inner}</g>;
const tile = (c, inner) => <g><rect x="3" y="3" width="42" height="42" rx="9" fill={c} />{inner}</g>;
const apps = [
  ["Finder", <g><rect x="3" y="4" width="42" height="40" rx="3" fill="#f0f4f8" /><path d="M6 4H25C21 14 20 22 21 27H25L26 44H6Q3 44 3 41V7Q3 4 6 4Z" fill="#2f9bf5" /><path d="M13 15v5M35 15v5M10 31C18 39 30 39 38 31" stroke="#123" strokeWidth="2.500" /></g>, 1],
  ["Siri", disc("#1c1338", <g><path d="M6 26C16 12 30 12 42 26 32 36 16 36 6 26Z" fill="#5a2a8c" opacity=".8" /><path d="M10 30C18 18 28 30 38 16" stroke="#e64bb0" strokeWidth="2.500" /><path d="M12 14C22 22 26 34 38 34" stroke="#4be0e8" strokeWidth="2.500" /><circle cx="24" cy="25" r="4" fill="#fff" /></g>)],
  ["Launchpad", disc("#a9b0b3", <g><path d="M17 31 20 21C25 13 30 10 37 9 37 17 34 23 27 28Z" fill="#444" /><path d="M19 22 11 25 16 28ZM27 29 24 38 20 33ZM16 32 10 39 18 35Z" fill="#444" /><circle cx="30" cy="17" r="3" fill="#a9b0b3" /></g>)],
  ["QCAD", <g><circle cx="24" cy="24" r="19" fill="#e8e8ea" stroke="#5468a0" strokeWidth="5" /><path d="M12 24H36M24 12V36" stroke="#c66" /><path d="M16 30 24 14 32 30" stroke="#777" /><path d="M22 22 27 18 45 40 46 46 40 44Z" fill="#f0a030" stroke="#a55" /></g>, 1],
  ["Edge", <g><circle cx="24" cy="24" r="21" fill="#1377c9" /><path d="M6 18C12 2 40 0 45 20 46 30 34 32 30 28 32 20 24 14 16 16 10 16 7 22 6 18Z" fill="#4fd06c" /><path d="M18 20C12 34 24 44 38 40 26 50 6 42 8 26 10 22 14 20 18 20Z" fill="#0c4f96" /></g>, 1],
  ["Skype", <g><circle cx="18" cy="18" r="15" fill="#1f9fe0" /><circle cx="30" cy="30" r="15" fill="#1f9fe0" /><circle cx="24" cy="24" r="17" fill="#1f9fe0" /><text x="24" y="35" textAnchor="middle" fontFamily={CAD} fontWeight="700" fontSize="30" fill="#fff">S</text></g>, 1],
  ["Zoom", tile("#4a86f7", <path d="M12 17H28V31H12ZM30 22 37 17V31L30 26Z" fill="#fff" />)],
  ["Webex", disc("#18a5d6", <path d="M14 22C16 10 32 10 34 22 34 34 20 40 14 30Z" fill="#fff" stroke="#5fb54a" strokeWidth="4" />), 1],
  ["Word", letter("#1b5cbe", "W", "#41a5ee"), 1],
  ["Excel", letter("#107c41", "X", "#33c481"), 1],
  ["PowerPoint", <g><circle cx="28" cy="24" r="19" fill="#ed6c47" /><rect x="2" y="13" width="24" height="24" rx="2" fill="#c43e1c" /><text x="14" y="32" textAnchor="middle" fontFamily={CAD} fontWeight="700" fontSize="19" fill="#fff">P</text></g>],
  ["OneNote", letter("#7719aa", "N", "#ca64ea"), 1],
  ["Teams", <g><circle cx="30" cy="11" r="7" fill="#7b83eb" /><rect x="18" y="18" width="24" height="24" rx="8" fill="#7b83eb" /><rect x="2" y="13" width="24" height="24" rx="2" fill="#4b53bc" /><text x="14" y="32" textAnchor="middle" fontFamily={CAD} fontWeight="700" fontSize="19" fill="#fff">T</text></g>, 1],
  ["Voorvertoning", <g><path d="M6 6 36 3 40 36 10 40Z" fill="#f4f4f4" stroke="#999" /><path d="M10 10 33 8 36 30 12 34Z" fill="#4c8fd6" /><path d="M12 28 36 24 36 30 12 34Z" fill="#d8c9a8" /><circle cx="36" cy="35" r="8" fill="#89a" stroke="#554" strokeWidth="3" /></g>, 1],
  ["Mail", <g><path d="M5 7 38 3 43 40 10 44Z" fill="#fff" stroke="#ccc" strokeDasharray="3 2" strokeWidth="2" /><path d="M9 11 35 7 39 36 13 40Z" fill="#3c86d8" /><path d="M18 30 28 16 34 30Z" fill="#b98" /></g>, 1],
  ["Contacten", <g><path d="M8 7 40 3 43 40 10 45Z" fill="#a9773c" /><circle cx="25" cy="24" r="9" stroke="#7b5224" strokeWidth="2" /></g>],
  ["FaceTime", <g><rect x="3" y="6" width="38" height="34" rx="8" fill="#43d35a" /><rect x="8" y="14" width="20" height="18" rx="4" fill="#fff" /><circle cx="36" cy="34" r="10" fill="#f4f4f4" /><path d="M32 30C32 38 38 40 41 38" stroke="#43d35a" strokeWidth="3" /></g>, 0, "6"],
  ["Agenda", <g><path d="M5 4H39L43 42H9Z" fill="#f7f7f7" stroke="#aaa" /><path d="M5 4H39L41 17H6Z" fill="#e2453c" /><text x="23" y="14" textAnchor="middle" fontFamily={CAD} fontSize="9" fill="#fff">JAN.</text><text x="25" y="38" textAnchor="middle" fontFamily={CAD} fontSize="22" fill="#222">7</text></g>, 1],
  ["Herinneringen", <g><path d="M6 4H38L42 42H10Z" fill="#fafafa" stroke="#aaa" /><circle cx="13" cy="13" r="3" fill="#27f" /><circle cx="14" cy="22" r="3" fill="#e44" /><circle cx="15" cy="31" r="3" fill="#fa0" /><path d="M20 13H34M20 22H35M20 31H36" stroke="#ccc" /></g>],
  ["PDF", <g><path d="M8 4 36 8 42 42 10 42Z" fill="#eee" stroke="#999" /><path d="M14 28H36M14 33H38" stroke="#bbb" strokeWidth="2" /><path d="M4 6H34V20H4Z" fill="#c9252b" /><text x="19" y="18" textAnchor="middle" fontFamily={CAD} fontWeight="700" fontSize="13" fill="#fff">PDF</text><path d="M14 44 44 10" stroke="#3b7ed0" strokeWidth="4" /></g>],
  ["Notities", <g><path d="M5 4H38L44 42H10Z" fill="#fbfbf7" stroke="#bbb" /><path d="M5 4H38L40 14H6Z" fill="#fccf34" /><path d="M10 22H38M11 29H39M12 36H40" stroke="#ccc" /></g>],
  ["Kaarten", <g><path d="M6 5 40 8 42 42 8 40Z" fill="#e9efe0" stroke="#bbb" /><path d="M6 5 22 6 12 26 7 24Z" fill="#76c65a" /><path d="M30 8 10 40" stroke="#f4b73b" strokeWidth="5" /><circle cx="37" cy="35" r="9" fill="#f4f4f4" stroke="#999" /></g>],
  ["Berichten", <g><ellipse cx="22" cy="20" rx="19" ry="17" fill="#39a0f5" /><path d="M10 32 6 42 20 36Z" fill="#39a0f5" /><ellipse cx="34" cy="34" rx="12" ry="10" fill="#f4f8fc" /><path d="M28 34h2M33 34h2M38 34h2" stroke="#39f" strokeWidth="3" /></g>],
  ["Foto's", disc("#fbfbfb", <g>{["#f9b233", "#f0d43a", "#8cc63f", "#39b5a5", "#4a8fd6", "#8e63c0", "#e0559a", "#ef5a3c"].map((c, i) => <ellipse key={c} cx="24" cy="14" rx="5" ry="9" fill={c} opacity=".85" transform={`rotate(${i * 45} 24 24)`} />)}</g>)],
  ["App Store", disc("#1e8df6", <path d="M15 34 27 12M21 12 33 34M11 28H37" stroke="#fff" strokeWidth="3.500" strokeLinecap="round" />)],
  ["Systeemvoorkeuren", <g><rect x="3" y="5" width="42" height="40" rx="4" fill="#9a9da1" /><circle cx="24" cy="25" r="14" stroke="#333" strokeWidth="5" strokeDasharray="4 2" /><circle cx="24" cy="25" r="6" fill="#444" /></g>, 0, "1"],
  ["Parallels", <g><rect x="2" y="4" width="30" height="32" fill="#3fa9e6" stroke="#223" strokeWidth="2" /><path d="M10 14 22 11V27L10 25Z" fill="#fc3" /><path d="M12 40H28" stroke="#ccc" strokeWidth="4" /><path d="M34 2V46M42 2V46" stroke="#e0352b" strokeWidth="6" /></g>],
  ["Tekstverwerker", tile("#4b95e4", <g><path d="M9 10H39V34H9Z" fill="#fff" /><path d="M14 14C20 30 32 26 34 14" stroke="#333" strokeWidth="2" /><path d="M26 22 38 42" stroke="#c98b3a" strokeWidth="4" /></g>)],
  ["Muziek", disc("#f6f6fa", <g><path d="M19 34V15L33 12V31" stroke="#e05bd0" strokeWidth="3.500" /><ellipse cx="16" cy="34" rx="5" ry="4" fill="#8a6df0" /><ellipse cx="30" cy="31" rx="5" ry="4" fill="#fa5b7c" /></g>)],
  ["Ontwerp", tile("#2f7bf6", <path d="M17 34 27 14 23 12M24 22 33 34M14 34H20M30 34H36" stroke="#fff" strokeWidth="3.500" />), 1],
  ["Beeldscherm", <g><path d="M2 8H46V36H2Z" fill="#3b93d6" stroke="#26313c" strokeWidth="2" /><path d="M20 36H28V42H20ZM14 42H34V45H14Z" fill="#26313c" /></g>, 1],
  null,
  ["Document", <g><path d="M9 2H32L40 14V46H9Z" fill="#fbfbfb" stroke="#ccc" /><path d="M32 2V14H40Z" fill="#ddd" /></g>],
  ["Downloads", <g><path d="M3 8H18L22 12H45V42H3Z" fill="#7cc8ea" /><path d="M3 16H45V42H3Z" fill="#93d6f2" /><path d="M16 22 30 20V34L16 32Z" fill="#63b4da" /></g>],
  ["Prullenmand", <g><path d="M8 6H40L36 45H12Z" fill="#dcdcd8" stroke="#aaa" /><path d="M9 8C16 0 32 0 39 8L30 13 24 9 16 13Z" fill="#f8f8f8" stroke="#888" /><path d="M16 16 18 42M24 16V42M32 16 30 42" stroke="#b5b5b0" /></g>],
];

/* -------------------------------------------------------------- components */

const DockTitle = ({ children }) => (
  <DockHeader>
    <RoundButton aria-label={`${children} sluiten`}><Svg s={18} vb="0 0 28 28"><circle cx="14" cy="14" r="14" fill="#484848" /><path d="M9 9 19 19M19 9 9 19" stroke="#fff" strokeWidth="4" /></Svg></RoundButton>
    <RoundButton aria-label={`${children} loskoppelen`}><Svg s={18} vb="0 0 28 28"><circle cx="14" cy="14" r="14" fill="#484848" /><path d="M7 13H17V21H7ZM11 13V8H21V16H17" stroke="#fff" strokeWidth="2" /></Svg></RoundButton>
    <h2>{children}</h2>
  </DockHeader>
);

const Select = ({ value, label, w, pad, off, blue, icon }) => (
  <SelectBox $w={w} $pad={pad} $off={off} $blue={blue}>
    <select aria-label={label} defaultValue={value} disabled={off}><option>{value}</option></select>
    {icon && <InSelect>{icon}</InSelect>}
    <Arrows $blue={blue} $off={off}><Chevrons /></Arrows>
  </SelectBox>
);

const Preferences = () => (
  <Dialog role="dialog" aria-label="Tekeningsvoorkeuren">
    <DialogTitle>
      <Lights $left={10} $gap={10}>
        <Light aria-label="Sluiten" $c="#ee6a5f" $b="#d9574c" /><Light aria-label="Minimaliseren" /><Light aria-label="Vergroten" $c="#62c554" $b="#51ae43" />
      </Lights>
      <h1>Tekeningsvoorkeuren</h1>
    </DialogTitle>
    <DialogBody>
      <FilterRow>
        <FilterInput placeholder="Filter" aria-label="Filter" />
        <SquareButton aria-label="Alles uitklappen"><Svg s={17} vb="0 0 26 26"><path d="M2 22V2H20M5 5H24V24H5ZM8 14.500H21M14.500 8V21" stroke="#222" strokeWidth="1.500" /></Svg></SquareButton>
        <SquareButton aria-label="Alles inklappen"><Svg s={17} vb="0 0 26 26"><path d="M2 22V2H20M5 5H24V24H5ZM8 14.500H21" stroke="#222" strokeWidth="1.500" /></Svg></SquareButton>
      </FilterRow>
      <HeadRow>
        Bemating: Bematingsvoorkeuren
        <SquareButton aria-label="Terugzetten"><Svg s={17} vb="0 0 26 26"><path d="M3 3V12H12L9 9C16 5 22 12 16 21 27 16 24 3 12 4 9 4 8 5 6 6Z" fill="#f9d08a" stroke="#e0962e" strokeWidth="1.500" /></Svg></SquareButton>
      </HeadRow>
      <Tree>
        {tree.map(([name, child]) => (
          <TreeRow key={name} $child={child} $sel={name === "Bematingsvoorkeuren"}>{!child && <Disclosure />}{name}</TreeRow>
        ))}
      </Tree>
      <PanelSide>
        <SplitDot />
        <Viewport>
          <Scroller>
            <Box $h={296} $cut>
              <Fields>
                {sizes.map(([l, v]) => (
                  <Field key={l} $cols="215px 253px minmax(0, 1fr)"><span>{l}</span><NumberInput defaultValue={v} /><Unit>Millimeter</Unit></Field>
                ))}
              </Fields>
              <Rule />
              <Field $cols="214px 171px"><span>Schaalfactor voor grootte:</span><NumberInput defaultValue="1" /></Field>
            </Box>
            <SubTitle $h={28} $size={13}>Pijlstijl</SubTitle>
            <Box $h={43}>
              <Radios>
                <label><Radio type="radio" name="pijl" />Pijl</label>
                <label><Radio type="radio" name="pijl" defaultChecked />Bouwkunde tick</label>
              </Radios>
            </Box>
            <SubTitle $h={27} $size={13}>Tekst</SubTitle>
            <Box $h={115}>
              <Combos>
                <Combo><span>Tekst lettertype:</span><Select value="Arial" w={297} blue /></Combo>
                <Combo><span>Tekst kleur:</span><Select value="Aangepast" w={203} pad={38} blue icon={<Swatch $c="#000048" $h={14} />} /></Combo>
              </Combos>
            </Box>
            <SubTitle $h={27} $size={13}>Nummerformaat</SubTitle>
            <Box $h={90}>
              <Combos>
                <Combo $left $cols="199px auto"><span>Decimaalscheidingsteken:</span><Select value=". (Punt)" w={101} blue /></Combo>
              </Combos>
            </Box>
          </Scroller>
          <VTrack $top={47}><VThumb $h={323} /></VTrack>
        </Viewport>
      </PanelSide>
      <Actions>
        <PushButton $w={120}>Toepassen</PushButton>
        <PushButton $w={106} $push>Annuleer</PushButton>
        <PushButton $w={87} $primary>OK</PushButton>
      </Actions>
    </DialogBody>
  </Dialog>
);

const Properties = () => (
  <Props>
    <SelectionRow><span>Selectie:</span><Select value="Geen selectie" /></SelectionRow>
    <GroupTitle $c="#b3b3b3">Algemeene eigenschappen</GroupTitle>
    <PropGroup>
      <PropTop>
        <PropLine $gap={17}><span>Laag:</span><Select value="" off /></PropLine>
        <MiniButton type="button" aria-label="Laagmenu"><Svg s={17} vb="0 0 26 26"><path d="M0 4H26M0 13H26M0 22H26" stroke="#b0b0b0" strokeWidth="4" /></Svg></MiniButton>
      </PropTop>
      <PropLine $mt={6} $gap={17} $end={4}><span>Kleur:</span><Select value="Door laag bepaald" pad={37} off icon={<Swatch $c="#f6f6f6" $b="#777" $h={14} />} /></PropLine>
      <PropLine $mt={11} $gap={17} $end={4}><span>Lijndikte:</span><Select value="Door laag bepaald" pad={37} off icon={<Svg s={21} h={14} vb="0 0 21 14"><path d="M0 7H21" stroke="#777" /></Svg>} /></PropLine>
      <PropLine $mt={11} $gap={17} $end={4}><span>Lijntype:</span><Select value="Door laag bepaald" off /></PropLine>
      <PropLine $mt={8} $gap={14}><span>Lijntypeschaal:</span><PropText disabled /></PropLine>
      <PropLine $mt={5} $gap={14}><span>Tekenvolgorde:</span><PropText disabled /></PropLine>
      <PropLine $mt={4} $gap={14}><span>Handle:</span><PropText disabled /></PropLine>
    </PropGroup>
  </Props>
);

const dark = "#1f2c3a";
const TrayIcons = () => (
  <>
    <TrayGroup $gap={14}>
      <Svg s={20}><ellipse cx="24" cy="24" rx="17" ry="19" stroke="#000" strokeWidth="8" /><path d="M14 36 34 12" stroke="#000" strokeWidth="3" /></Svg>
      <Svg s={20}><path d="M16 3Q26 0 32 6 44 10 44 24 46 44 30 45 20 48 14 42 4 38 4 24 2 6 16 3Z" fill={dark} /><path d="M16 24 22 30 32 17" stroke="#fff" strokeWidth="4" /></Svg>
      <Svg s={20}><path d="M32 4C10 0 4 22 10 32 16 46 38 46 42 24M30 14C18 12 14 24 18 30 24 38 34 32 32 24" stroke="#9aa8b5" strokeWidth="4" /><circle cx="25" cy="24" r="3" fill="#9aa8b5" /></Svg>
      <TrayGroup $gap={7}>
        {[0, 1].map((k) => <Svg key={k} s={24}><path d="M4 30C4 22 12 18 16 20 20 6 34 8 34 20 44 20 46 36 38 38H10C5 38 4 34 4 30Z" fill="#6d7f8f" /><path d="M6 36 32 20C44 20 46 36 38 38H10Z" fill={dark} /></Svg>)}
        <Svg s={22}><circle cx="24" cy="24" r="21" fill="#0d141b" /><circle cx="22" cy="24" r="11" stroke="#cdd" strokeWidth="4" /><path d="M22 18 28 24 22 30 16 24Z" fill="#cdd" /></Svg>
        <Mem><b>MEM</b>82%</Mem>
      </TrayGroup>
    </TrayGroup>
    <TrayGroup $gap={14}>
      <Svg s={24}><path d="M10 16A18 18 0 1 1 12 34M26 12V26L32 32" stroke={dark} strokeWidth="3" /><path d="M2 20H16L9 30Z" fill={dark} /></Svg>
      <Svg s={30}><path d="M14 14 34 34 24 44V4L34 14 14 34" stroke="#8898a8" strokeWidth="3" /><circle cx="14" cy="24" r="3" fill={dark} /><circle cx="24" cy="24" r="3" fill={dark} /><circle cx="34" cy="24" r="3" fill={dark} /></Svg>
      <Svg s={26}><path d="M3 18C16 6 32 6 45 18M11 26C18 19 30 19 37 26M18 33C22 30 26 30 30 33" stroke={dark} strokeWidth="4" /><circle cx="24" cy="39" r="3" fill={dark} /></Svg>
      <Svg s={22}><path d="M2 16H12L22 7V41L12 32H2Z" fill={dark} /><path d="M29 16C32 20 32 28 29 32M36 11C42 18 42 30 36 37" stroke={dark} strokeWidth="3.500" /></Svg>
    </TrayGroup>
    <span>Do 7 jan.&nbsp; 12:03</span>
    <TrayGroup $gap={17}>
      <Svg s={22}><circle cx="20" cy="20" r="14" stroke={dark} strokeWidth="4" /><path d="M30 30 44 44" stroke={dark} strokeWidth="4" /></Svg>
      <Svg s={21}><circle cx="24" cy="24" r="22" fill="#2a2560" /><path d="M8 30C18 20 28 30 40 18M16 8C22 18 24 30 34 40" stroke="#5fe0f0" strokeWidth="3" /></Svg>
      <Svg s={24}><path d="M2 8H6M14 8H46M2 24H6M14 24H38M2 40H6M14 40H46" stroke={dark} strokeWidth="6" /></Svg>
    </TrayGroup>
  </>
);

export default function App() {
  return (
    <>
      <Global />
      <Desktop>
        <MenuBar>
          <MenuList>
            <Svg s={18} h={22} vb="0 0 40 46"><path d="M28 1C28 7 24 11 19 11 19 5 23 2 28 1ZM35 32C33 38 29 44 25 44 22 44 21 42.500 18 42.500 15 42.500 14 44 11 44 6 44 1 34 1 26 1 17 7 12.500 12 12.500 15 12.500 17 14 19 14 21 14 24 12 28 12 31 12 34 14 35.500 16 28 20 29 30 35 32Z" fill={dark} /></Svg>
            <MenuButton $strong>QCAD Pro</MenuButton>
            {menus.map((m) => <MenuButton key={m}>{m}</MenuButton>)}
          </MenuList>
          <Tray><TrayIcons /></Tray>
        </MenuBar>
        <TitleBar>
          <Lights $left={11} $gap={10}><Light aria-label="Venster sluiten" /><Light aria-label="Venster minimaliseren" /><Light aria-label="Venster vergroten" /></Lights>
          2021001-01 Zorgunit Almelo.dxf - QCAD
        </TitleBar>
        <ToolBar><Strip items={bar1} w={1540} /></ToolBar>
        <ToolBar><Strip items={bar2} w={1799} /></ToolBar>
        <Main>
          <Palette>
            <PaletteDots />
            {palette.map(([h, ids]) => (
              <PaletteGroup key={h + ids[0]} $h={h}>
                {ids.map((id) => <PaletteButton key={id} aria-label={id} $menu={!noMenu.includes(id)}><Svg>{paletteIcons[id]}</Svg></PaletteButton>)}
              </PaletteGroup>
            ))}
          </Palette>
          <Center>
            <Tab>
              <Svg s={17}><circle cx="24" cy="24" r="20" fill="#f4f4f4" stroke="#4a62a8" strokeWidth="7" /><path d="M14 26H34M24 14V34" stroke="#c66" /><path d="M22 22 26 18 46 42 42 46Z" fill="#f0a030" /></Svg>
              <TabTitle>2021001-01 Zorgunit Almelo.dxf</TabTitle>
            </Tab>
            <RulerTop><HRuler /></RulerTop>
            <CanvasRow>
              <RulerSide><VRuler /></RulerSide>
              <Canvas><Drawing /></Canvas>
              <VTrack $top={459}><VThumb $h={608} /></VTrack>
            </CanvasRow>
            <HScroll><HTrack><HThumb /></HTrack><ScaleNote>1000 &lt; 10000</ScaleNote></HScroll>
            <Log>
              <LogLines><p>Formaat: R24 (2010) DXF Tekening (OpenDesign) (*.dxf)</p><p><em>Opdracht: drawingpreferences</em></p></LogLines>
              <VTrack $top={24} $bg="#fff"><VThumb $h={20} /></VTrack>
            </Log>
            <Command>Opdracht:<CommandInput /><CommandButton type="button" aria-label="Opties"><Svg s={15} h={11} vb="0 0 24 18"><path d="M1 1H23V17H1Z" stroke="#111" strokeWidth="2" fill="#fff" /><path d="M1 1H23V6H1Z" fill="#111" /></Svg></CommandButton></Command>
          </Center>
          <Docks>
            <DockTitle>Bloklijst</DockTitle>
            <DockTools>
              <DockTool aria-label="Toon alle blokken"><Eye /></DockTool>
              <DockTool aria-label="Verberg alle blokken"><Eye off /></DockTool>
              <DockTool aria-label="Blok toevoegen"><Plus /></DockTool>
              <DockTool aria-label="Blok verwijderen" $off><Minus /></DockTool>
              <DockTool $off>a|b</DockTool>
              <DockTool aria-label="Blok bewerken"><Pencil s={20} /></DockTool>
              <DockTool aria-label="Blok invoegen" $off><Svg s={18} vb="0 0 28 28"><path d="M3 1H25V27H3Z" fill="#f4f4f4" stroke="#999" /><path d="M5 3C17 2 19 8 18 18H23L16 26 9 18H14C14 11 12 8 5 9Z" fill="#3563ee" /></Svg></DockTool>
              <DockTool aria-label="Blok ontbinden"><Svg s={14} vb="0 0 22 22"><rect x="1" y="1" width="20" height="20" rx="2" fill="#e8875f" stroke="#e23" strokeWidth="1.500" /><path d="M7 7 15 15M15 7 7 15" stroke="#fff" strokeWidth="3" /></Svg></DockTool>
            </DockTools>
            <ListFrame $h={372}>
              <List>{blocks.map((b, i) => <Row key={b} $cols="29px 28px minmax(0, 1fr)"><Eye />{i === 0 ? <Pencil /> : <i />}<span>{b}</span></Row>)}</List>
              <VTrack $top={4}><VThumb $h={226} /></VTrack>
            </ListFrame>
            <DockTitle>Lagenlijst</DockTitle>
            <DockTools>
              <DockTool aria-label="Toon alle lagen"><Eye /></DockTool>
              <DockTool aria-label="Verberg alle lagen"><Eye off /></DockTool>
              <DockTool aria-label="Laag toevoegen"><Plus /></DockTool>
              <DockTool aria-label="Laag verwijderen"><Minus /></DockTool>
              <DockTool aria-label="Laag bewerken"><Pencil s={20} /></DockTool>
            </DockTools>
            <ListFrame $h={387}>
              <List>{layers.map(([n, c, st]) => <Row key={n} $cols="29px minmax(0, 1fr) 27px 31px 20px"><Swatch $c={c} /><span>{n}</span>{st === "edit" ? <Pencil /> : <i />}<Eye off={st === "off"} /><Lock /></Row>)}</List>
              <VTrack $top={4}><VThumb $h={282} /></VTrack>
            </ListFrame>
            <DockTitle>Eigenschappen-editor</DockTitle>
            <Properties />
          </Docks>
        </Main>
        <StatusBar>
          <Coords><span>-5587,7940</span><span>@-5587,7940</span></Coords>
          <Coords $line><span>9708&lt;125°</span><span>@9708&lt;125°</span></Coords>
          <StatusHint>
            <Dot />
            <span>Object of gebied selecteren</span>
            <Svg s={26} h={38} vb="0 0 26 38"><path d="M13 0V8" stroke="#555" /><rect x="4" y="8" width="18" height="26" rx="8" fill="#f8f8f8" stroke="#444" /><path d="M4 18H22M13 8V18" stroke="#444" /></Svg>
          </StatusHint>
          <StatusCell><Dot />Geen objecten geselecteerd.</StatusCell>
          <StatusCell><Dot /></StatusCell>
        </StatusBar>
        <DockBar>
          {apps.map((a, i) => a === null ? <DockLine key={i} /> : (
            <DockApp key={a[0]} aria-label={a[0]}><Svg s={33}>{a[1]}</Svg>{a[2] ? <Running /> : <i />}{a[3] && <Badge>{a[3]}</Badge>}</DockApp>
          ))}
        </DockBar>
        <Preferences />
      </Desktop>
    </>
  );
}
